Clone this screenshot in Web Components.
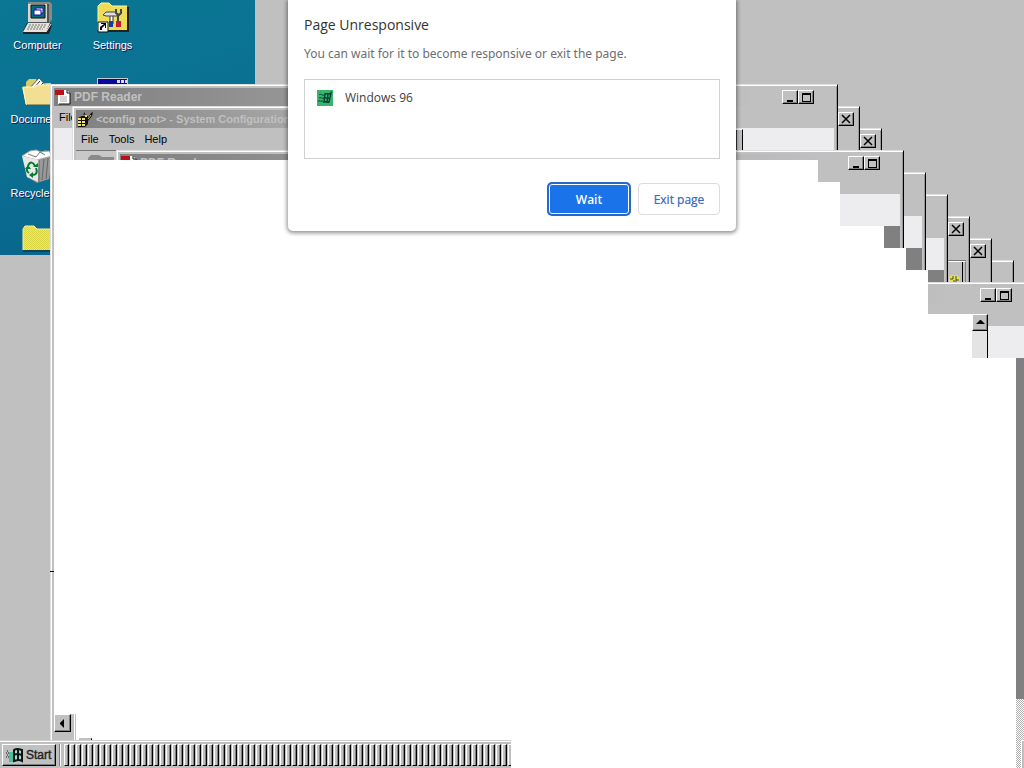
<!DOCTYPE html>
<html lang="en">
<head>
<meta charset="utf-8">
<title>Windows 96</title>
<style>
html,body{margin:0;height:100%}
body{font:11px/14px "Liberation Sans",Arial,sans-serif;color:#000;overflow:hidden}
</style>
</head>
<body>
<w96-desktop></w96-desktop>
<script>
const define = (name, html, init) => customElements.define(name, class extends HTMLElement {
  constructor() {
    super();
    this.attachShadow({ mode: 'open' }).innerHTML = html;
  }
  connectedCallback() { if (init) init(this, this.shadowRoot); }
});

const art = {
  computer: `<svg width="32" height="34" viewBox="0 0 32 34"><path d="M7 1h20l3-1v18l-3 4H7z" fill="#555"/><path d="M6 1h19v20H6z" fill="#d8d8d0"/><path d="M6 1h22l2 2v16l-3 3V3H6z" fill="#888"/><path d="M9 4h14v13H9z" fill="#056b78" stroke="#111"/><path d="M14 7h7v5h-7z" fill="#eee" stroke="#22a"/><path d="M12 9h7v5h-7z" fill="#fff" stroke="#11a"/><path d="M5 22h23l2 2-3 9H1v-3z" fill="#222"/><path d="M6 22h22l-4 9H1z" fill="#e4e4dc"/><path d="M7 24h17M6 26h17M5 28h16" stroke="#777" stroke-dasharray="2 1"/><path d="M24 31l5-8" stroke="#eee"/></svg>`,
  settings: `<svg width="32" height="32" viewBox="0 0 32 32"><path d="M1 4l3-3h8l3 3h15v24H1z" fill="#eddc58"/><path d="M1 28V4l3-3h8l3 3h15" fill="none" stroke="#fff8a0"/><path d="M31 5v24H4" fill="none" stroke="#222" stroke-width="2"/><path d="M13 13h3v9h-3z" fill="#fff" stroke="#333"/><path d="M6 13l3-3h9l2 2v2H9z" fill="#ddd" stroke="#444"/><path d="M19 7v4l3 2 2-2V7M21 13v7" fill="none" stroke="#444" stroke-width="2"/><path d="M12 19h4v6h-4z" fill="#123f9f"/><path d="M19 19h5v6h-5z" fill="#c31c35"/><path d="M1 20h10v10H1z" fill="#fff" stroke="#111"/><path d="M3 28v-3l4-3H4v-1h5v5H8v-3l-3 3v2z" fill="#000"/></svg>`,
  documents: `<svg width="32" height="30" viewBox="0 0 32 30"><path d="M4 5l3-3h7l3 4h12v20H4z" fill="#d9cc68"/><path d="M7 12L17 1l10 11v8H7z" fill="#fff" stroke="#555"/><path d="M12 11l6-7M15 12l6-6M19 13l4-4" stroke="#333"/><path d="M0 10h12l2-2h16l1 20H4z" fill="#f2df92"/><path d="M1 10h12l2-2h14M1 10l3 17" fill="none" stroke="#fff8c8"/><path d="M31 9v19H5" fill="none" stroke="#554"/></svg>`,
  recycle: `<svg width="32" height="34" viewBox="0 0 32 34"><path d="M1 6l9-5 8 2 6-2 6 6-3 23-12 4L5 28z" fill="#8e938f"/><path d="M0 7l15 4 15-4-3-5-8 1-5-2-6 1z" fill="#fff" stroke="#aaa"/><path d="M6 5l8 3 4-5 5 3" fill="none" stroke="#777"/><path d="M0 7l17 4-1 22L5 28z" fill="#e8e9e6"/><path d="M17 11l13-4-3 23-11 3z" fill="#969a99"/><path d="M17 11v22M22 10l-2 21M26 9l-2 21" stroke="#666"/><path d="M6 17c2-5 5-4 7 0M14 19c2 5 0 7-4 7M7 24c-3-2-3-5 0-6" fill="none" stroke="#067a30" stroke-width="2"/><path d="M11 18h5v-4zM11 23v6l-4-3zM3 20h6l-3-4z" fill="#067a30"/></svg>`,
  folder: `<svg width="32" height="30" viewBox="0 0 32 30"><defs><pattern id="d" width="2" height="2" patternUnits="userSpaceOnUse"><path d="M0 0h2v2H0z" fill="#d9d443"/><path d="M0 0h1v1H0zM1 1h1v1H1z" fill="#ece96c"/></pattern></defs><path d="M1 4l2-3h9l3 3h16v21H1z" fill="url(#d)"/><path d="M1 25V4l2-3h9l3 3h16" fill="none" stroke="#f5f0a0"/><path d="M1 26h31V5" fill="none" stroke="#222"/></svg>`,
  program: `<svg width="32" height="28" viewBox="0 0 32 28"><path d="M0 0h31v28H0z" fill="#c8c8c8"/><path d="M1 1h29v7H1z" fill="#0808a0"/><path d="M20 2h3v3h-3zM24 2h3v3h-3zM28 2h2v3h-2z" fill="#ddd"/><path d="M2 9h28v17H2z" fill="#fff"/></svg>`,
  pdf: `<svg width="16" height="16" viewBox="0 0 16 16"><path d="M3 1h9l3 3v11H3z" fill="#fff"/><path d="M15 4v11H4M12 1v3h3" fill="none" stroke="#111"/><path d="M0 1h9v5H0z" fill="#bd1016"/><path d="M5 8h7M5 10h7M5 12h7" stroke="#aaa"/></svg>`,
  config: `<svg width="16" height="16" viewBox="0 0 16 16"><path d="M1 7l4-2h6v8l-3 3H1z" fill="#111"/><path d="M1 7h3v2H1zM5 7h3v2H5zM1 10h3v2H1zM5 10h3v2H5zM1 13h3v2H1zM5 13h3v2H5zM8 4h2v2H8z" fill="#eee06a"/><path d="M6 4l2-3v2h2M10 8l4-6 2-1-1 4-4 5z" fill="#111"/><path d="M11 8l3-4" stroke="#d8c840"/></svg>`,
  flag: `<svg width="18" height="16" viewBox="0 0 18 16"><path d="M1 4h2M0 6h3M1 8h2M0 10h3" stroke="#111" stroke-dasharray="1 1"/><path d="M3 5h5v10H3z" fill="#41c3a0"/><path d="M8 3c3-2 5-1 8 0v11c-3-2-5-1-8 0z" fill="#a5ded0" stroke="#111" stroke-width="2"/><path d="M8 8c3-2 5-1 8 0M12 2v11" fill="none" stroke="#111" stroke-width="2"/></svg>`
};

define('w96-icon', `<style>
:host{display:flex;flex-direction:column;align-items:center;height:74px;width:75px;color:#fff}
.pic{height:36px;display:flex;align-items:center}
span{display:block;white-space:nowrap;text-shadow:1px 1px 0 #111a58;line-height:16px;padding-top:1px}
:host([cut]) span{min-width:54px}
</style><div class="pic"></div><span><slot></slot></span>`, (el, root) => {
  root.querySelector('.pic').innerHTML = art[el.getAttribute('art')];
});

define('w96-sysbutton', `<style>
:host{display:block;width:16px;height:14px}
button{display:flex;align-items:center;justify-content:center;box-sizing:border-box;width:100%;height:100%;padding:0;background:#c0c0c0;border:1px solid;border-color:#fff #000 #000 #fff;border-radius:0;box-shadow:inset -1px -1px #808080}
</style><button type="button"></button>`, (el, root) => {
  const shapes = {
    min: '<path d="M2 8h6v2H2z"/>',
    max: '<path fill-rule="evenodd" d="M1 1h9v9H1zM2 3v6h7V3z"/>',
    close: '<path d="M1 1l8 8M9 1l-8 8" stroke="#000" stroke-width="1.5"/>',
    up: '<path d="M1 7h9L6 3H5z"/>',
    left: '<path d="M3 5v1l4 4V1z"/>'
  };
  const k = el.getAttribute('kind'), b = root.querySelector('button');
  b.setAttribute('aria-label', k);
  b.innerHTML = `<svg width="11" height="11" viewBox="0 0 11 11">${shapes[k]}</svg>`;
});

define('w96-window', `<style>
:host{position:absolute;box-sizing:border-box;display:flex;flex-direction:column;background:#c0c0c0;padding:3px;border:1px solid;border-color:#dfdfdf #000 #000 #dfdfdf;box-shadow:inset 1px 1px #fff,inset -1px -1px #999;overflow:hidden}
header{display:flex;align-items:center;gap:3px;flex:none;height:18px;padding:0 2px 0 1px;background:linear-gradient(90deg,#808080,#c0c0c0 90%);color:#c0c0c0;font-weight:bold;font-size:12px;white-space:nowrap}
:host([kind=config]) header{font-size:11px}
.cap{flex:1;display:flex;align-items:center;gap:3px}
.cap svg{flex:none}
nav{display:flex;flex:none;height:22px;align-items:center;gap:10px;padding:0 5px}
nav button{all:unset;font-size:11px}
:host([covered]) nav{width:13px;overflow:hidden}
.sys{display:flex;align-self:flex-start;padding-top:2px}
:host([plainend]) .sys{padding-right:18px}
.bar{flex:none;height:32px;background:#ededf0}
.body{flex:1;background:#808080}
:host([kind=config]) .bar{background:#c8c8c8;border-top:1px solid #777}
:host([kind=config]) .body{background:#c0c0c0}
</style><header><div class="cap"></div><div class="sys"></div></header><nav></nav><div class="bar"><slot></slot></div><div class="body"></div>`, (el, root) => {
  const icon = el.getAttribute('icon');
  root.querySelector('.cap').innerHTML = (icon ? art[icon] : '') + '<span></span>';
  root.querySelector('.cap span').textContent = el.getAttribute('caption') || '';
  root.querySelector('.sys').innerHTML = (el.getAttribute('sys') || '').split(' ').filter(Boolean).map(k => `<w96-sysbutton kind="${k}"></w96-sysbutton>`).join('');
  root.querySelector('nav').innerHTML = (el.getAttribute('menu') || '').split(' ').filter(Boolean).map(t => `<button type="button">${t}</button>`).join('');
});

define('w96-taskbar', `<style>
:host{position:absolute;left:0;bottom:0;width:calc(50% - 1px);height:28px;box-sizing:border-box;display:flex;background:#c0c0c0;border-top:1px solid #d0d0d0;box-shadow:inset 0 1px #fff;padding:3px 0 2px 2px;overflow:hidden}
.start{flex:none;display:flex;align-items:center;gap:2px;width:54px;padding:0 0 0 3px;font:12px "Liberation Sans",Arial,sans-serif;color:#222;background:#c0c0c0;border:1px solid;border-color:#fff #000 #000 #fff;box-shadow:inset -1px -1px #808080}
.start span{-webkit-text-stroke:.4px #222}
i{flex:none;width:1px;margin:0 2px 0 3px;background:#fff;border-left:1px solid #808080}
.tasks{display:flex;gap:1px;padding-left:1px}
.tasks button{flex:none;box-sizing:border-box;width:5px;padding:0;background:#c0c0c0;border:1px solid;border-color:#fff #000 #000 #fff;border-radius:0;box-shadow:inset -1px 0 #808080}
</style><button class="start" type="button">${art.flag}<span>Start</span></button><i></i><div class="tasks"></div>`, (el, root) => {
  root.querySelector('.tasks').innerHTML = '<button type="button" aria-label="Window"></button>'.repeat(75);
});

define('page-dialog', `<style>
:host{position:absolute;top:0;left:50%;transform:translateX(-50%);box-sizing:border-box;width:448px;padding:16px;background:#fff;border-radius:0 0 5px 5px;box-shadow:0 1px 4px 1px rgba(0,0,0,.45);font-family:"Open Sans","Noto Sans",sans-serif;color:#3c4043}
h1{margin:0;font-size:14px;line-height:18px;font-weight:400;color:#333}
p{margin:10px 0 15px;font:12px/20px "Noto Sans","Open Sans",sans-serif;color:#6b6e72;white-space:nowrap}
.list{box-sizing:border-box;height:80px;border:1px solid #d0d0d0;padding:10px 12px}
.row{display:flex;align-items:center;gap:12px;height:16px;font-size:12px}
.actions{display:flex;justify-content:flex-end;gap:8px;margin-top:24px}
button{box-sizing:border-box;width:82px;height:32px;padding:0;border-radius:4px;border:1px solid #dadce0;background:#fff;color:#3367c0;font:600 12px "Open Sans","Noto Sans",sans-serif}
.wait{background:#1a73e8;color:#fff;border-color:#2868c8;box-shadow:0 0 0 1px #2868c8,inset 0 0 0 1px #fff}
.exit{font-weight:500;-webkit-text-stroke:.2px #3367c0}
</style>
<h1>Page Unresponsive</h1>
<p>You can wait for it to become responsive or exit the page.</p>
<div class="list"><div class="row"><svg width="16" height="16" viewBox="0 0 16 16"><path d="M0 0h16v16H0z" fill="#37b56b"/><path d="M2 5c2-2 3 1 5 0M2 8c2-1 3 1 5 0M1 11c2-1 3 1 5 0" fill="none" stroke="#083e35"/><path d="M8 4c2-1 4 1 6-1l-2 9c-2 1-3-1-5 0zM7 8c2-1 4 1 6 0M11 4l-1 8" fill="none" stroke="#083e35" stroke-width="1.4"/></svg><span>Windows 96</span></div></div>
<div class="actions"><button class="wait" type="button">Wait</button><button class="exit" type="button">Exit page</button></div>`);

define('w96-desktop', `<style>
:host{display:block;position:relative;height:100%;overflow:hidden;background:#c0c0c0}
.wall{display:grid;grid-template-columns:75px 75px;grid-template-rows:repeat(4,74px);align-content:start;height:255px;width:255px;overflow:hidden;background:linear-gradient(165deg,#0a7794,#0b7092 50%,#08618b)}
.win{width:788px;height:420px}
.void{position:absolute;inset:0;background:#fff;clip-path:polygon(54px 160px,818px 160px,818px 182px,840px 182px,840px 226px,884px 226px,884px 248px,906px 248px,906px 270px,928px 270px,928px 314px,972px 314px,972px 358px,calc(100% - 8px) 358px,calc(100% - 8px) 100%,54px 100%)}
.bit{position:absolute;box-sizing:border-box}
.dither{right:0;top:699px;bottom:0;width:8px;background:repeating-conic-gradient(#b0b0b0 0 25%,#fff 0 50%) 0 0/2px 2px}
.track{background:#e4e4e4;border-right:1px solid #000}
.track w96-sysbutton{height:17px}
.glyph{display:block;margin:3px 0 0 12px}
</style>
<div class="wall">
<w96-icon art="computer">Computer</w96-icon><w96-icon art="settings">Settings</w96-icon>
<w96-icon art="documents" cut>Docume</w96-icon><w96-icon art="program"></w96-icon>
<w96-icon art="recycle" cut>Recycle</w96-icon><span></span>
<w96-icon art="folder"></w96-icon>
</div>
<w96-window class="win" style="left:226px;top:260px" kind="config"></w96-window>
<w96-window class="win" style="left:204px;top:238px" kind="config" sys="close"></w96-window>
<w96-window class="win" style="left:182px;top:216px" kind="config" sys="close"></w96-window>
<w96-window class="win" style="left:160px;top:194px"></w96-window>
<w96-window class="win" style="left:138px;top:172px"></w96-window>
<w96-window class="win" style="left:94px;top:128px" kind="config" sys="close"></w96-window>
<w96-window class="win" style="left:72px;top:106px" kind="config" sys="close"></w96-window>
<w96-window class="win" style="left:50px;top:84px;height:680px" icon="pdf" caption="PDF Reader" menu="File" sys="min max" plainend covered></w96-window>
<w96-window class="win" style="left:72px;top:106px;width:400px" kind="config" icon="config" caption="&lt;config root&gt; - System Configuration" menu="File Tools Help"><svg class="glyph" width="26" height="10" viewBox="0 0 26 10"><path d="M0 10V4l3-3h8l3 2h12v7z" fill="#8a8a8a"/></svg></w96-window>
<div class="bit" style="left:730px;top:129px;width:13px;height:21px;background:#c0c0c0;border-right:1px solid #000;border-top:1px solid #fff;box-shadow:inset -5px 0 #c0c0c0,inset -7px 0 #333"></div>
<w96-window class="win" style="left:116px;top:150px" icon="pdf" caption="PDF Reader" sys="min max" plainend></w96-window>
<div class="bit" style="left:948px;top:261px;width:18px;height:30px;background:#c0c0c0;border:1px solid;border-color:#fff #808080 #000 #c0c0c0;box-shadow:inset -2px 0 #c0c0c0,inset -3px 0 #000"><svg width="14" height="21" viewBox="0 0 14 21"><path d="M0 15l3-2h5l3 3-1 5H0z" fill="#e5e34a"/><path d="M1 17h3v-3M7 14v4h3M4 19h4" fill="none" stroke="#444"/></svg></div>
<w96-window class="win" style="left:248px;top:282px;height:430px" sys="min max" plainend></w96-window>
<div class="bit dither"></div>
<div class="void"></div>
<div class="bit" style="left:50px;top:571px;width:4px;height:1px;background:#000"></div>
<div class="bit track" style="left:972px;top:314px;width:16px;height:44px"><w96-sysbutton kind="up"></w96-sysbutton></div>
<div class="bit" style="left:54px;top:714px;width:18px;height:30px;background:#c0c0c0"><w96-sysbutton kind="left" style="height:18px;width:17px"></w96-sysbutton></div>
<div class="bit" style="left:72px;top:714px;width:4px;height:30px;background:#c0c0c0;border-right:1px solid #c0c0c0;box-shadow:inset -1px 0 #fff"></div>
<div class="bit" style="left:79px;top:738px;width:13px;height:6px;background:#c0c0c0;border-top:1px solid #c0c0c0;border-right:1px solid #000"></div>
<div class="bit" style="right:0;top:740px;width:3px;bottom:0;background:#c0c0c0;border-left:1px solid #fff;border-top:1px solid #fff"></div>
<w96-taskbar></w96-taskbar>
<page-dialog></page-dialog>`);
</script>
</body>
</html>
